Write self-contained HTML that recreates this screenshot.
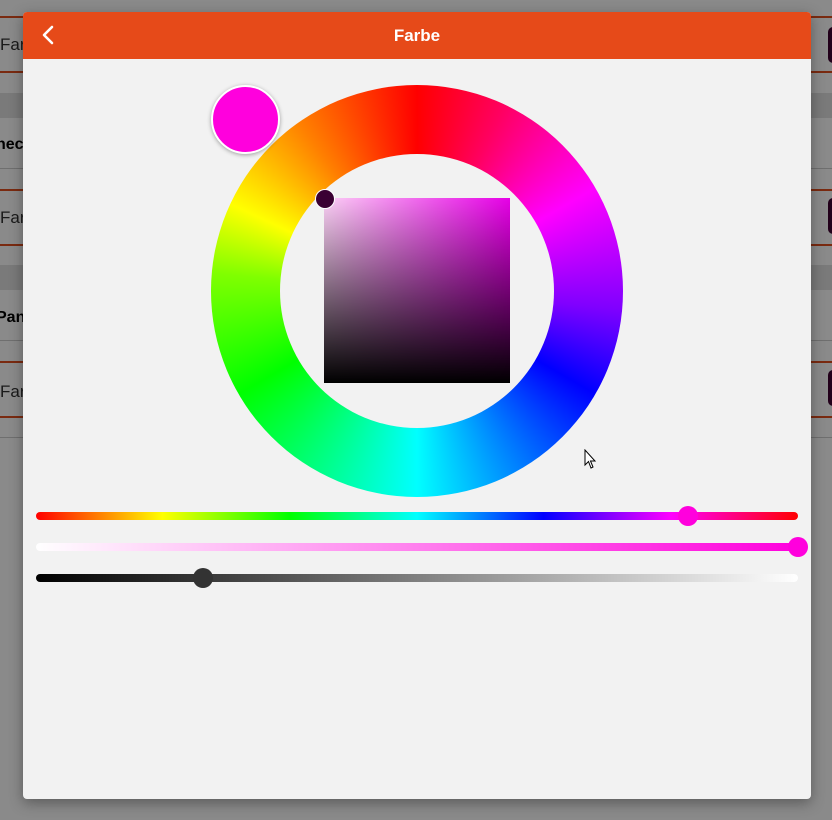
<!DOCTYPE html>
<html><head><meta charset="utf-8"><style>
*{margin:0;padding:0;box-sizing:border-box}
body{width:832px;height:820px;overflow:hidden;position:relative;background:#8a8a8a;font-family:"Liberation Sans",sans-serif}
.abs{position:absolute}
.bl{position:absolute;left:0;width:832px;height:2px;background:#7a2a10}
.gl{position:absolute;left:0;width:832px;height:1px;background:#6f6f6f}
.t{position:absolute;left:0;font-size:17px;color:#1a1a1a}
.b{position:absolute;left:-4px;font-size:16px;font-weight:bold;color:#000}
.sw{position:absolute;left:828px;width:12px;height:36px;border-radius:5px;background:#22001a}
.dlg{position:absolute;left:23px;top:12px;width:788px;height:787px;background:#f2f2f2;border-radius:4px;overflow:hidden;box-shadow:0 4px 14px rgba(0,0,0,.35)}
.hdr{height:47px;background:#e64a19;color:#fff;font-weight:bold;font-size:17px;text-align:center;line-height:47px}
.track{position:absolute;left:13px;width:762px;height:8px;border-radius:4px}
.th{position:absolute;width:20px;height:20px;border-radius:50%}
</style></head><body>
<div class="abs" style="left:0;top:93px;width:832px;height:25px;background:#7a7a7a"></div>
<div class="abs" style="left:0;top:265px;width:832px;height:25px;background:#7a7a7a"></div>
<div class="bl" style="top:16px"></div><div class="bl" style="top:71px"></div>
<div class="t" style="top:35px">Far</div>
<div class="b" style="top:136px">nec</div>
<div class="gl" style="top:168px"></div>
<div class="bl" style="top:189px"></div><div class="bl" style="top:244px"></div>
<div class="t" style="top:208px">Far</div>
<div class="b" style="top:309px">Pan</div>
<div class="gl" style="top:340px"></div>
<div class="bl" style="top:361px"></div><div class="bl" style="top:416px"></div>
<div class="t" style="top:382px">Far</div>
<div class="gl" style="top:437px"></div>
<div class="sw" style="top:27px"></div><div class="sw" style="top:198px"></div><div class="sw" style="top:370px"></div>

<div class="dlg">
<div class="hdr">Farbe</div>
<svg class="abs" style="left:17px;top:13px" width="16" height="20" viewBox="0 0 16 20"><path d="M12 2 L4 10 L12 18" fill="none" stroke="#fff" stroke-width="2.6" stroke-linecap="round" stroke-linejoin="round"/></svg>
<!-- wheel -->
<div class="abs" style="left:188px;top:73px;width:412px;height:412px;border-radius:50%;background:conic-gradient(from 0deg,#ff0000,#ff0060 25deg,#ff00ff 60deg,#8000ff 95deg,#0000ff 120deg,#0080ff 150deg,#00ffff 180deg,#00ff80 210deg,#00ff00 240deg,#80ff00 275deg,#ffff00 295deg,#ff8000 325deg,#ff0000 360deg)"></div>
<div class="abs" style="left:257px;top:142px;width:274px;height:274px;border-radius:50%;background:#f2f2f2"></div>
<div class="abs" style="left:301px;top:186px;width:186px;height:185px;background:linear-gradient(to bottom,rgba(0,0,0,0),#000),linear-gradient(to right,#fbd0f5,#e600e6)"></div>
<div class="abs" style="left:292px;top:177px;width:20px;height:20px;border-radius:50%;background:#3a0033;border:1.5px solid #fff"></div>
<div class="abs" style="left:188px;top:73px;width:69px;height:69px;border-radius:50%;background:#ff00dd;border:2px solid #fff;box-shadow:0 1px 4px rgba(0,0,0,.35)"></div>
<!-- sliders -->
<div class="track" style="top:500px;background:linear-gradient(to right,#ff0000,#ffff00 16.6%,#00ff00 33.3%,#00ffff 50%,#0000ff 66.6%,#ff00ff 83.3%,#ff0000)"></div>
<div class="th" style="left:655px;top:494px;background:#ff00dd"></div>
<div class="track" style="top:531px;background:linear-gradient(to right,#ffffff,#ff00dd)"></div>
<div class="th" style="left:765px;top:525px;background:#ff00dd"></div>
<div class="track" style="top:562px;background:linear-gradient(to right,#000,#fff)"></div>
<div class="th" style="left:170px;top:556px;background:#333"></div>
</div>
<svg class="abs" style="left:584px;top:449px" width="14" height="22" viewBox="0 0 14 22"><path d="M1 1 L1 16 L4.5 12.5 L7 19 L9 18 L6.5 12 L11 12 Z" fill="#fff" stroke="#000" stroke-width="1"/></svg>
</body></html>
